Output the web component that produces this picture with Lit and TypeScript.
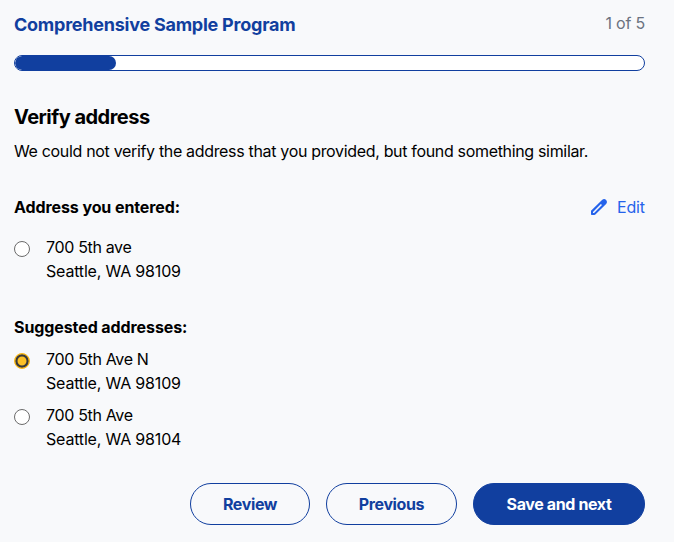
import { LitElement, html, css } from "lit";
import { customElement, property, state } from "lit/decorators.js";
import { classMap } from "lit/directives/class-map.js";

interface Address {
  id: string;
  street: string;
  city: string;
}

const ENTERED: Address[] = [
  { id: "entered", street: "700 5th ave", city: "Seattle, WA 98109" },
];
const SUGGESTED: Address[] = [
  { id: "north", street: "700 5th Ave N", city: "Seattle, WA 98109" },
  { id: "plain", street: "700 5th Ave", city: "Seattle, WA 98104" },
];

@customElement("address-option")
class AddressOption extends LitElement {
  @property({ attribute: false }) address!: Address;
  @property({ type: Boolean }) checked = false;

  static styles = css`
    :host { display: block; }
    .option { display: flex; gap: 16px; line-height: 24px; cursor: pointer; }
    .radio {
      box-sizing: border-box;
      flex: none;
      width: 16px;
      height: 16px;
      margin-top: 6px;
      border: 1px solid #6b6b6b;
      border-radius: 50%;
      background: #fff;
    }
    .radio.checked {
      border: 1px solid #fcba19;
      box-shadow: inset 0 0 0 0.3px #fcba19, inset 0 0 0 2.5px #383a3c;
      background: #fcc026;
    }
    .street, .city { display: block; white-space: nowrap; }
    .street { letter-spacing: -0.34px; }
    .city { letter-spacing: -0.18px; }
  `;

  render() {
    return html`
      <div class="option" role="radio" aria-checked=${this.checked}>
        <span class=${classMap({ radio: true, checked: this.checked })}></span>
        <span>
          <span class="street">${this.address.street}</span>
          <span class="city">${this.address.city}</span>
        </span>
      </div>
    `;
  }
}

@customElement("app-root")
class AppRoot extends LitElement {
  @state() private selected = "north";

  static styles = css`
    :host {
      display: block;
      box-sizing: border-box;
      height: 542px;
      padding: 11px 29px 0 14px;
      background: #f8f9fb;
      color: #000;
      font: 400 16px/24px Inter, "Liberation Sans", sans-serif;
      letter-spacing: -0.3px;
    }
    .top, .entered-head {
      display: flex;
      justify-content: space-between;
      align-items: center;
      white-space: nowrap;
    }
    .top { height: 28px; }
    .program { margin: 0; font-size: 18px; line-height: 28px; font-weight: 700; color: #113f9f; letter-spacing: -0.24px; }
    .count { color: #6b7280; margin-top: -5px; letter-spacing: -0.2px; }
    .track {
      box-sizing: border-box;
      height: 16px;
      margin-top: 16px;
      border: 1px solid #113f9f;
      border-radius: 8px;
      background: #fff;
      overflow: hidden;
    }
    .bar { height: 100%; border-radius: 8px; background: #113f9f; }
    .title { margin: 32px 0 8px; font-size: 20px; line-height: 28px; font-weight: 700; letter-spacing: -0.52px; white-space: nowrap; }
    .lead { margin: 0 0 32px; white-space: nowrap; letter-spacing: -0.33px; }
    .label { margin: 0; font-size: 16px; font-weight: 700; letter-spacing: -0.09px; }
    .edit { display: flex; align-items: center; gap: 10px; color: #2563eb; }
    .edit-text { letter-spacing: -0.1px; }
    .edit svg { display: block; }
    .entered { margin: 16px 0 32px; }
    .suggested { display: grid; gap: 8px; margin-top: 8px; }
    .actions { display: flex; justify-content: flex-end; gap: 16px; margin-top: 32px; }
    .button {
      box-sizing: border-box;
      height: 42px;
      padding: 0;
      border: 1px solid #113f9f;
      border-radius: 21px;
      background: transparent;
      color: #113f9f;
      font: inherit;
      font-weight: 700;
      letter-spacing: -0.38px;
      white-space: nowrap;
    }
    .review { width: 120px; }
    .previous { width: 131px; }
    .next { width: 172px; background: #113f9f; color: #fff; }
  `;

  private option(address: Address) {
    return html`<address-option
      .address=${address}
      ?checked=${this.selected === address.id}
      @click=${() => (this.selected = address.id)}
    ></address-option>`;
  }

  render() {
    return html`
      <div class="top">
        <h1 class="program">Comprehensive Sample Program</h1>
        <span class="count">1 of 5</span>
      </div>
      <div class="track"><div class="bar" style="width: 16.1%"></div></div>
      <h2 class="title">Verify address</h2>
      <p class="lead">We could not verify the address that you provided, but found something similar.</p>
      <div class="entered-head">
        <h3 class="label">Address you entered:</h3>
        <span class="edit">
          <svg width="16" height="16" viewBox="0 0 16 16">
            <path fill="currentColor" fill-rule="evenodd" d="M0 11.7 11 .9Q13.200-.8 15.100.9 16.800 2.800 15.100 5L4.400 15.600Q4 16 3.400 16H.7Q0 16 0 15.300zM2 12.900v1.100H3.100L11 6.100 9.900 5z" />
          </svg>
          <span class="edit-text">Edit</span>
        </span>
      </div>
      <div class="entered">${ENTERED.map((a) => this.option(a))}</div>
      <h3 class="label">Suggested addresses:</h3>
      <div class="suggested">${SUGGESTED.map((a) => this.option(a))}</div>
      <div class="actions">
        <button class="button review">Review</button>
        <button class="button previous">Previous</button>
        <button class="button next">Save and next</button>
      </div>
    `;
  }
}
